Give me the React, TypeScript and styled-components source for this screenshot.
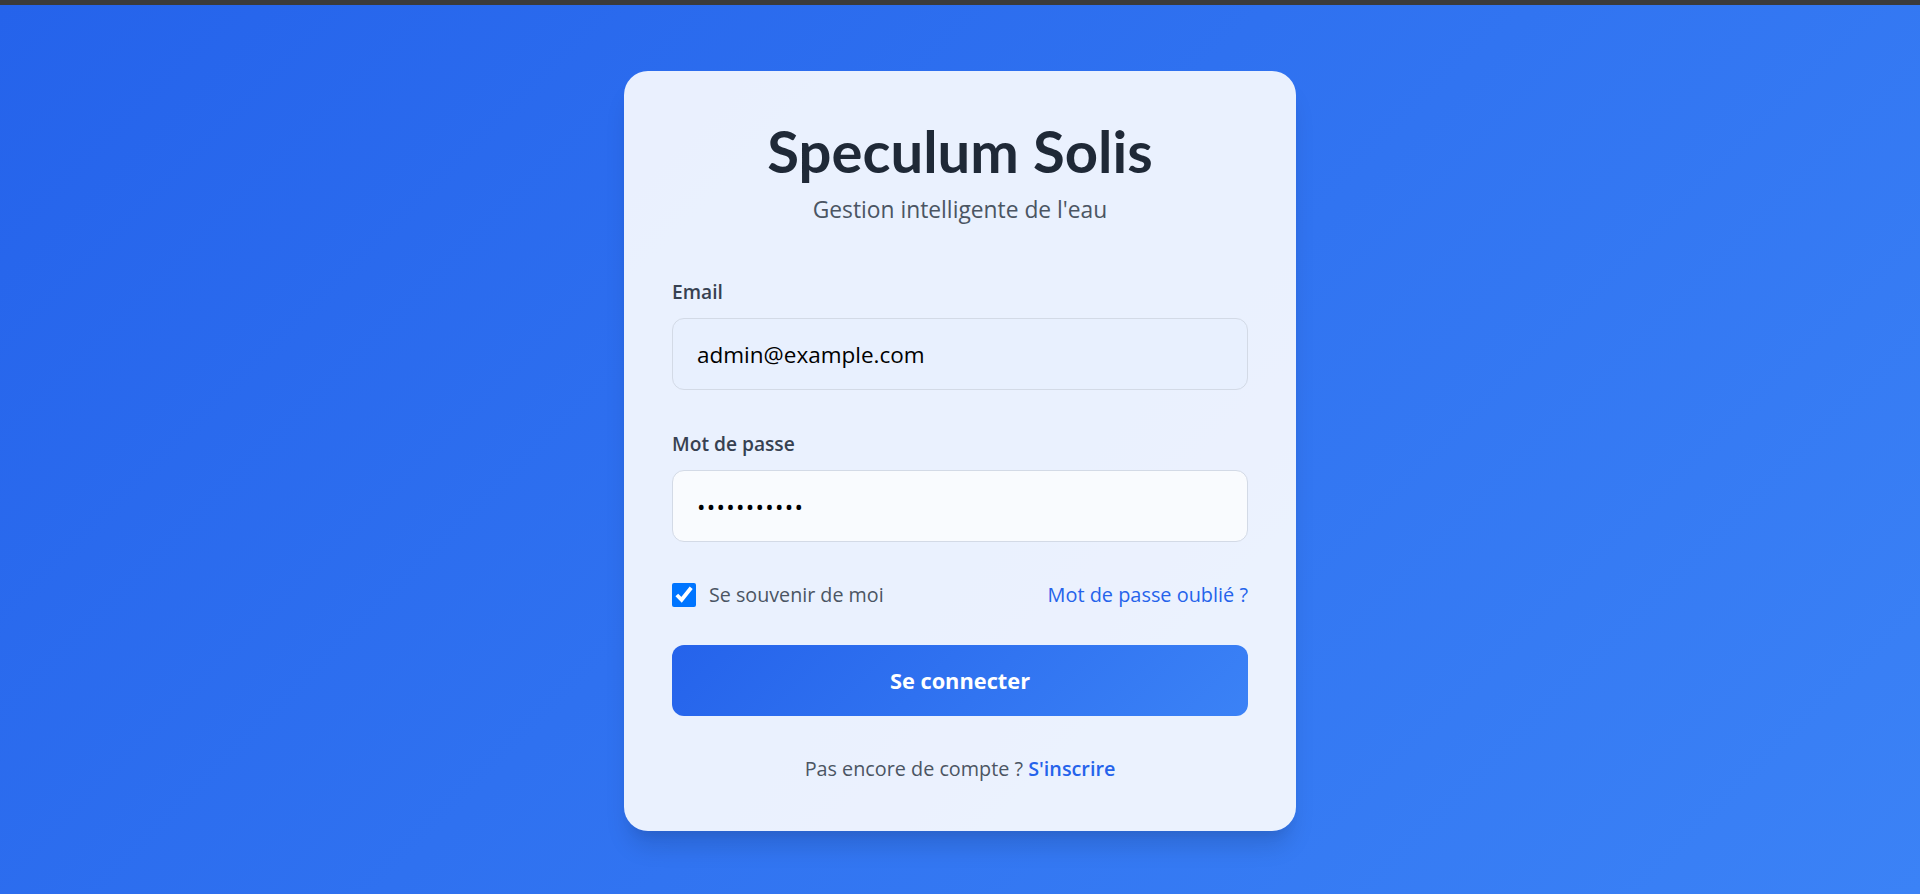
import React from "react";
import styled, { createGlobalStyle } from "styled-components";

const GlobalStyle = createGlobalStyle`
  html, body {
    margin: 0;
    padding: 0;
    height: 100%;
  }
  body {
    font-family: "Open Sans", "Noto Sans", Arial, sans-serif;
    background: #2563eb;
  }
  * { box-sizing: border-box; }
`;

const Page = styled.div`
  display: flex;
  flex-direction: column;
  min-height: 100vh;
`;

const TopStrip = styled.div`
  height: 5px;
  background: #3b3b3b;
  flex-shrink: 0;
`;

const Stage = styled.main`
  flex: 1;
  display: flex;
  align-items: flex-start;
  justify-content: center;
  padding-top: 66px;
  background: linear-gradient(135deg, #2563eb 0%, #3b82f6 100%);
`;

const Card = styled.section`
  width: 672px;
  padding: 46px 48px 47px;
  border-radius: 24px;
  background: rgba(255, 255, 255, 0.9);
  box-shadow: 0 20px 25px -5px rgba(0, 0, 0, 0.12), 0 10px 10px -5px rgba(0, 0, 0, 0.05);
`;

const Header = styled.header`
  display: flex;
  flex-direction: column;
  align-items: center;
  margin-bottom: 53px;
`;

const Title = styled.h1`
  margin: 0;
  font-family: Lato, "Open Sans", sans-serif;
  font-weight: 700;
  font-size: 58px;
  line-height: 68px;
  color: #1f2937;
`;

const Subtitle = styled.p`
  margin: 10px 0 0;
  font-size: 22.8px;
  line-height: 30px;
  color: #4b5563;
`;

const Form = styled.form`
  display: flex;
  flex-direction: column;
`;

const Field = styled.div`
  display: flex;
  flex-direction: column;
  gap: 12px;
  & + & {
    margin-top: 40px;
  }
`;

const Label = styled.label`
  font-size: 19.2px;
  line-height: 28px;
  font-weight: 600;
  color: #374151;
`;

const Input = styled.input<{ $filled?: boolean }>`
  width: 100%;
  height: 72px;
  padding: 0 24px;
  border: 1px solid #d3dae6;
  border-radius: 12px;
  background: ${(p) => (p.$filled ? "#e8f0fe" : "#f9fbfe")};
  font-family: "Open Sans", sans-serif;
  font-size: 22.5px;
  color: #000;
  outline: none;
  letter-spacing: ${(p) => (p.$filled ? "0" : "1.3px")};
`;

const OptionsRow = styled.div`
  margin-top: 38px;
  height: 30px;
  display: flex;
  align-items: center;
  justify-content: space-between;
`;

const Remember = styled.label`
  display: flex;
  align-items: center;
  gap: 13px;
  font-size: 19.7px;
  line-height: 30px;
  color: #4b5563;
`;

const Check = styled.input`
  width: 24px;
  height: 24px;
  margin: 0;
  accent-color: #0075ff;
`;

const Link = styled.a<{ $strong?: boolean }>`
  color: #2563eb;
  text-decoration: none;
  font-weight: ${(p) => (p.$strong ? 600 : 400)};
`;

const ForgotLink = styled(Link)`
  font-size: 19.9px;
  line-height: 30px;
`;

const SubmitButton = styled.button`
  margin-top: 35px;
  height: 71px;
  width: 100%;
  border: none;
  border-radius: 12px;
  background: linear-gradient(135deg, #2563eb 0%, #3b82f6 100%);
  color: #fff;
  font-family: "Open Sans", sans-serif;
  font-weight: 700;
  font-size: 21.8px;
  cursor: pointer;
`;

const Footer = styled.p`
  margin: 38px 0 0;
  text-align: center;
  font-size: 19.8px;
  line-height: 30px;
  color: #4b5563;
`;

export default function App() {
  return (
    <>
      <GlobalStyle />
      <Page>
        <TopStrip />
        <Stage>
          <Card>
            <Header>
              <Title>Speculum Solis</Title>
              <Subtitle>Gestion intelligente de l'eau</Subtitle>
            </Header>
            <Form onSubmit={(e) => e.preventDefault()}>
              <Field>
                <Label htmlFor="email">Email</Label>
                <Input id="email" type="email" $filled defaultValue="admin@example.com" />
              </Field>
              <Field>
                <Label htmlFor="password">Mot de passe</Label>
                <Input id="password" type="password" defaultValue="password123" />
              </Field>
              <OptionsRow>
                <Remember>
                  <Check type="checkbox" defaultChecked />
                  Se souvenir de moi
                </Remember>
                <ForgotLink href="#">Mot de passe oublié ?</ForgotLink>
              </OptionsRow>
              <SubmitButton type="submit">Se connecter</SubmitButton>
            </Form>
            <Footer>
              Pas encore de compte ? <Link href="#" $strong>S'inscrire</Link>
            </Footer>
          </Card>
        </Stage>
      </Page>
    </>
  );
}
